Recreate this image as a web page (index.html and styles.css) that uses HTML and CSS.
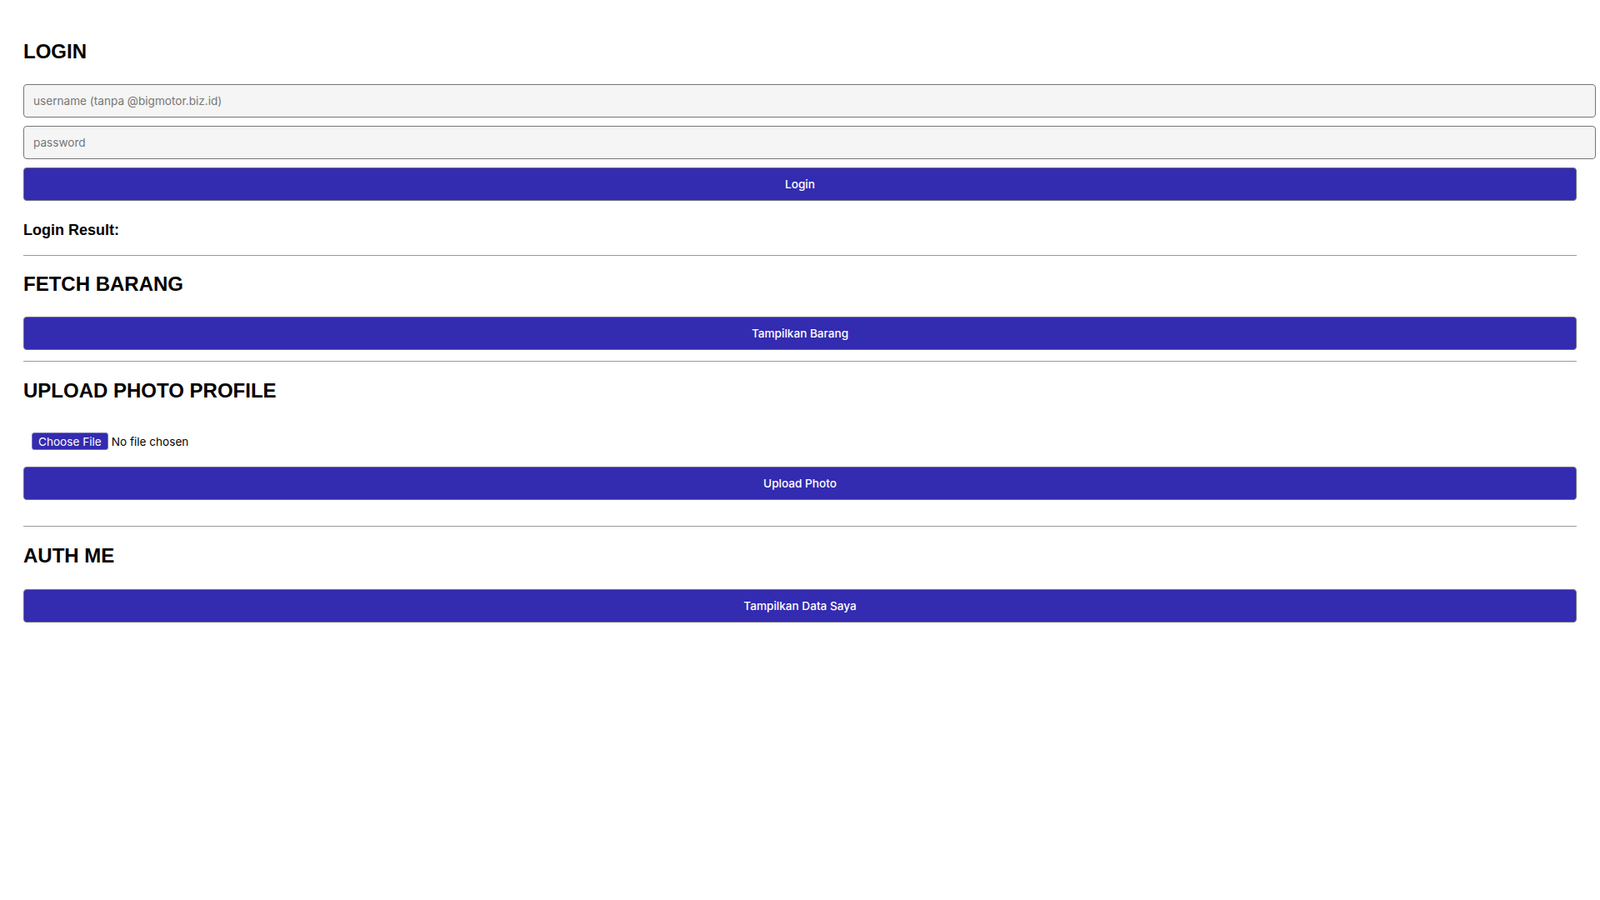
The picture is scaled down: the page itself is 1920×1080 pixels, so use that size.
FILE: index.html
```
<!DOCTYPE html>
<html lang="en">
<head>
    <meta charset="UTF-8">
    <meta name="viewport" content="width=device-width, initial-scale=1.0">
    <title>Test API</title>
    <link rel="stylesheet" href="styles.css">
</head>
<body>
    <div class="page">
        <h2 class="title">LOGIN</h2>
        <input class="field" type="text" placeholder="username (tanpa @bigmotor.biz.id)">
        <input class="field" type="password" placeholder="password">
        <button class="btn">Login</button>
        <h3 class="result">Login Result:</h3>
        <hr class="line line-result">

        <h2 class="title">FETCH BARANG</h2>
        <button class="btn">Tampilkan Barang</button>
        <hr class="line line-fetch">

        <h2 class="title title-upload">UPLOAD PHOTO PROFILE</h2>
        <div class="file-row">
            <input class="file" type="file">
        </div>
        <button class="btn btn-upload">Upload Photo</button>
        <hr class="line line-upload">

        <h2 class="title title-auth">AUTH ME</h2>
        <button class="btn">Tampilkan Data Saya</button>
    </div>
</body>
</html>
```

FILE: styles.css
```
* {
    margin: 0;
    padding: 0;
    box-sizing: border-box;
}

body {
    background: #fff;
    color: #000;
    font-family: "Liberation Sans", Arial, sans-serif;
}

.page {
    padding: 28px 28px 0;
}

.title {
    font-size: 24px;
    line-height: 28px;
    font-weight: bold;
    margin: 20px 0 25px;
}

.title-upload {
    margin-top: 21px;
}

.title-auth {
    margin-top: 21px;
    margin-bottom: 26px;
}

.field {
    display: block;
    width: calc(100% + 23px);
    height: 40px;
    margin-bottom: 10px;
    padding: 0 11px;
    border: 1px solid #767676;
    border-radius: 4px;
    background: #f5f5f5;
    font-family: Inter, "Noto Sans", sans-serif;
    font-size: 13.6px;
    color: #222;
}

.field::placeholder {
    color: #767676;
}

.btn {
    display: block;
    width: 100%;
    height: 40px;
    border: 1px solid #6f6f7a;
    border-radius: 4px;
    background: #332bb0;
    color: #fff;
    font-family: Inter, "Noto Sans", sans-serif;
    font-size: 13.6px;
    font-weight: 500;
    cursor: pointer;
}

.result {
    font-size: 18px;
    line-height: 22px;
    font-weight: bold;
    margin-top: 24px;
}

.line {
    border: 0;
    border-top: 1px solid #999;
    height: 0;
}

.line-result {
    margin-top: 19px;
}

.line-fetch {
    margin-top: 13px;
}

.line-upload {
    margin-top: 31px;
}

.file-row {
    padding: 11px 10px 10px;
}

.file {
    font-family: Inter, "Noto Sans", sans-serif;
    font-size: 13.6px;
    color: #000;
    height: 21px;
}

.file::file-selector-button {
    height: 21px;
    padding: 0 7px;
    margin-right: 4px;
    border: 1px solid #7a78b8;
    border-radius: 3px;
    background: #332bb0;
    color: #fff;
    font-family: Inter, "Noto Sans", sans-serif;
    font-size: 13.6px;
}

.btn-upload {
    margin-top: 10px;
}
```
